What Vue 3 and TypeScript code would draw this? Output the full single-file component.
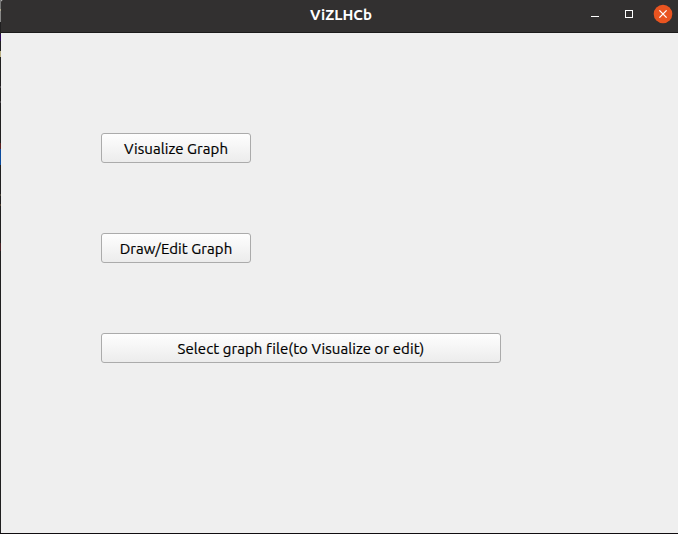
<script setup lang="ts">
interface Action {
  id: string
  label: string
}

const title = 'ViZLHCb'
const actions: Action[] = [
  { id: 'visualize', label: 'Visualize Graph' },
  { id: 'draw', label: 'Draw/Edit Graph' },
  { id: 'select', label: 'Select graph file(to Visualize or edit)' },
]
</script>

<template>
  <div class="desktop">
    <div class="backdrop"></div>
    <div class="window">
      <header class="titlebar">
        <h1 class="title"><span>{{ title }}</span></h1>
        <div class="controls">
          <svg class="control" width="20" height="20" viewBox="0 0 20 20">
            <rect x="6" y="12" width="8" height="1" fill="#fff" />
          </svg>
          <svg class="control" width="20" height="20" viewBox="0 0 20 20">
            <rect x="6.5" y="6.5" width="7" height="7" fill="none" stroke="#fff" />
          </svg>
          <svg class="control" width="20" height="20" viewBox="0 0 20 20">
            <circle cx="10" cy="10" r="9.3" fill="#e95420" />
            <path d="M6.4 6.4l7.2 7.2M13.6 6.4l-7.2 7.2" stroke="#fff" stroke-width="1.3" fill="none" />
          </svg>
        </div>
      </header>
      <main class="content">
        <button v-for="a in actions" :key="a.id" type="button" class="action" :class="a.id">
          <span class="label">{{ a.label }}</span>
        </button>
      </main>
    </div>
  </div>
</template>

<style>
body {
  margin: 0;
  overflow: hidden;
}
</style>

<style scoped>
.desktop {
  display: grid;
  grid-template-columns: 1px 1fr;
  width: 678px;
  height: 534px;
  box-sizing: border-box;
  padding-bottom: 1px;
  background: #100d10;
  font-family: Ubuntu, "Noto Sans", sans-serif;
}
.backdrop {
  background: linear-gradient(
    #777 0 9px, #b0aa90 9px 11px, #888 11px 22px, #201f20 22px 34px,
    #2b0a58 34px 41px, #201f20 41px 51px, #b9af82 51px 57px, #201f20 57px 86px,
    #484448 86px 88px, #201f20 88px 101px, #484448 101px 103px, #201f20 103px 143px,
    #5a2020 143px 149px, #0b4a9c 149px 165px, #201f20 165px 194px,
    #484438 194px 196px, #201f20 196px 204px, #504030 204px 206px,
    #201f20 206px 243px, #4a2024 243px 251px, #201f20 251px
  );
}
.window {
  display: flex;
  flex-direction: column;
  background: #efefef;
}
.titlebar {
  display: grid;
  grid-template-columns: 1fr auto 1fr;
  height: 33px;
  box-sizing: border-box;
  padding-bottom: 4px;
  align-items: center;
  border-bottom: 1px solid #1c1b1b;
  background: #323030;
  border-top-left-radius: 2px;
}
.title {
  grid-column: 2;
  margin: 0;
  padding: 2px 0 0 3px;
  color: #fff;
  font-size: 15px;
  line-height: 20px;
  font-weight: 700;
}
.controls {
  grid-column: 3;
  display: flex;
  justify-content: flex-end;
  gap: 14px;
  padding-right: 5px;
}
.control {
  display: block;
}
.content {
  flex: 1;
  display: flex;
  flex-direction: column;
  align-items: flex-start;
  gap: 70px;
  padding: 100px 0 0 100px;
}
.action {
  width: 150px;
  height: 30px;
  box-sizing: border-box;
  padding: 1px 0 0;
  border: 1px solid #ababab;
  border-radius: 3px;
  background: linear-gradient(#fefefe, #ececec);
  color: #000;
  font: 15px/27px Ubuntu, "Noto Sans", sans-serif;
  letter-spacing: 0.07px;
  -webkit-text-stroke: 0.2px #000;
  white-space: nowrap;
}
.select {
  width: 400px;
}
</style>
